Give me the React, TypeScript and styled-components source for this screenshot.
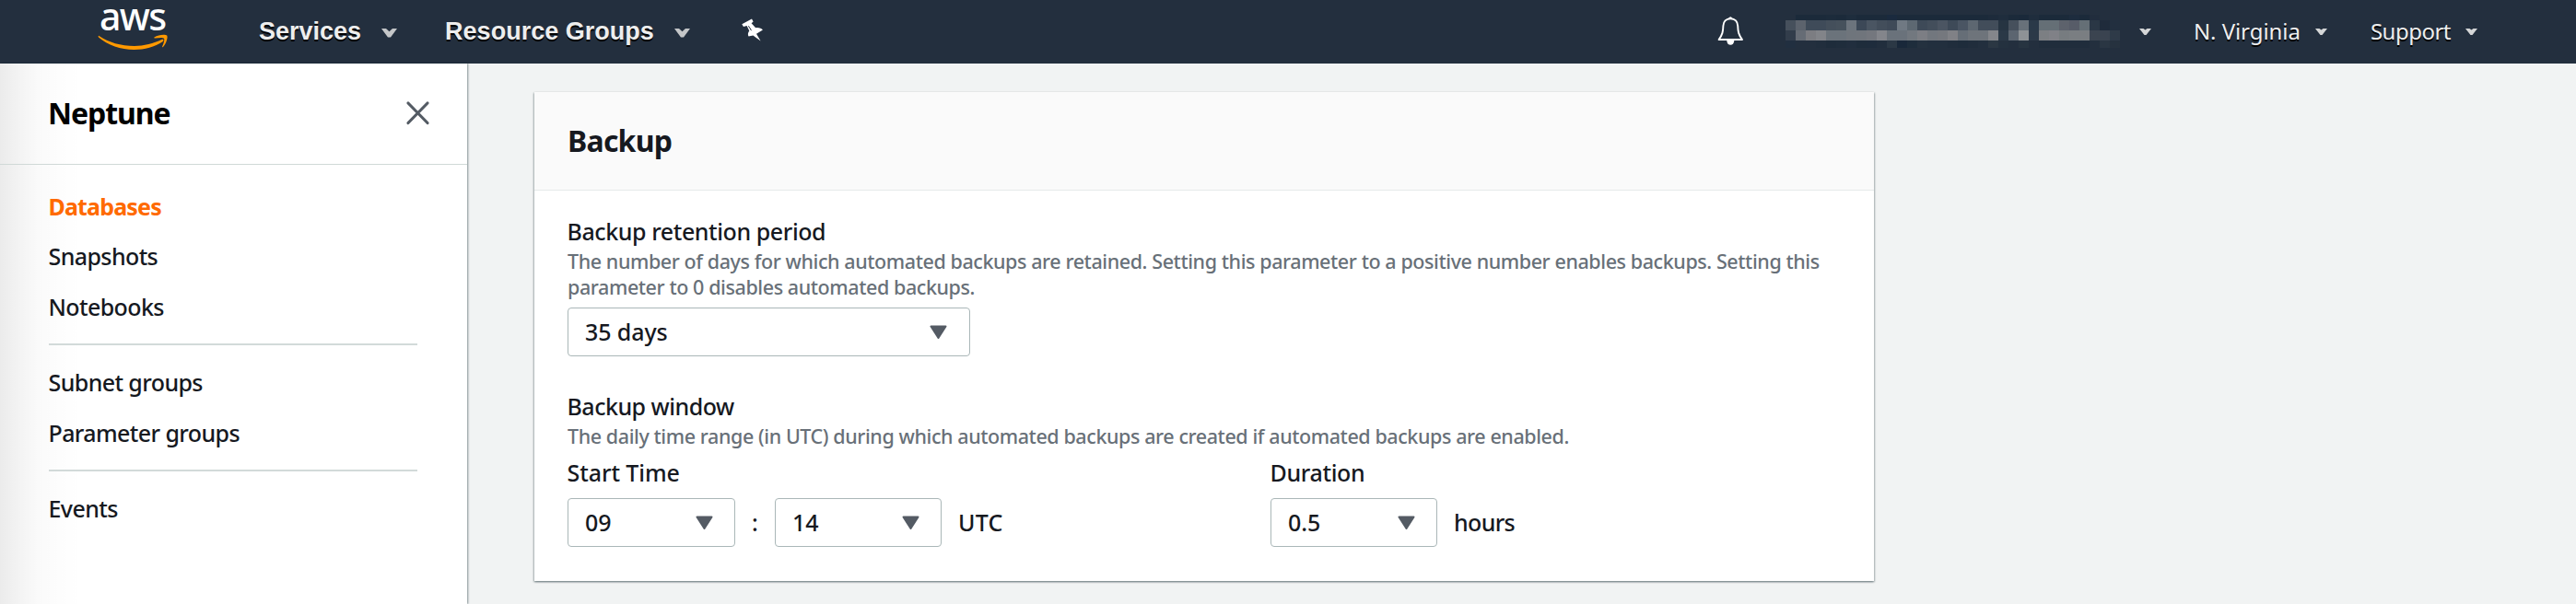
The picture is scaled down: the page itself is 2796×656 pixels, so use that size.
import React from 'react';
import styled, { createGlobalStyle, css } from 'styled-components';

const GlobalStyle = createGlobalStyle`
  * { box-sizing: border-box; }
  body {
    margin: 0;
    background: #f1f3f3;
    color: #16191f;
    font-family: 'Noto Sans', 'Open Sans', sans-serif;
    font-size: 25px;
    font-weight: 500;
  }
  svg { display: block; flex: none; }
`;

const Page = styled.div`
  display: flex;
  flex-direction: column;
  height: 656px;
`;

/* ---------- top bar ---------- */

const TopBar = styled.header`
  display: flex;
  align-items: flex-start;
  justify-content: space-between;
  height: 69px;
  flex: none;
  background: #232f3e;
  color: #eee;
`;

const TopGroup = styled.div`
  display: flex;
  height: 69px;
`;

const LeftGroup = styled(TopGroup)`
  padding-left: 106px;
`;

const RightGroup = styled(TopGroup)`
  padding-right: 107px;
`;

const Logo = styled.a`
  display: flex;
  flex-direction: column;
  width: 77px;
  margin-right: 98px;
  color: #fff;
`;

const LogoWord = styled.span`
  height: 37px;
  padding-left: 2px;
  font-size: 41px;
  font-weight: 500;
  line-height: 35px;
  letter-spacing: -1.7px;
`;

const MenuButton = styled.a<{ $gap: number; $after: number }>`
  display: flex;
  gap: ${(p) => p.$gap}px;
  margin-right: ${(p) => p.$after}px;
  text-shadow: 0 2px 0 #000;
`;

const PrimaryText = styled.span`
  font: bold 27px/68px 'Liberation Sans', Arial, sans-serif;
`;

const SecondaryText = styled.span<{ $track: number }>`
  font-size: 24px;
  font-weight: 400;
  line-height: 67px;
  letter-spacing: ${(p) => p.$track}px;
`;

const CaretBox = styled.span`
  padding-top: 31px;
`;

const PinBox = styled.span`
  padding-top: 19px;
`;

const BellBox = styled.span`
  padding-top: 17px;
  margin-right: 45px;
`;

const Redacted = styled.div`
  display: grid;
  grid-template-columns: repeat(33, 11px);
  grid-template-rows: 6px 11px 11px 8px;
  height: 36px;
  margin: 16px 21px 0 0;
`;

const Cell = styled.i<{ $c: string }>`
  background: ${(p) => p.$c};
`;

/* ---------- side navigation ---------- */

const Body = styled.div`
  display: flex;
  flex: 1;
`;

const Sidebar = styled.nav`
  width: 507px;
  flex: none;
  background: linear-gradient(
    to right,
    rgba(0, 0, 0, 0.08) 0,
    rgba(0, 0, 0, 0.05) 18px,
    rgba(0, 0, 0, 0.02) 42px,
    rgba(0, 0, 0, 0.008) 66px,
    rgba(0, 0, 0, 0) 90px
  ), #fff;
  box-shadow: 1px 0 2px 0 rgba(0, 28, 36, 0.45);
`;

const SideHeader = styled.div`
  display: flex;
  justify-content: space-between;
  height: 110px;
  padding: 0 40px 0 52px;
  border-bottom: 1px solid #d0d9d7;
`;

const SideTitle = styled.h2`
  margin: 0;
  color: #000;
  font-size: 32px;
  font-weight: 700;
  line-height: 107px;
  letter-spacing: -1.05px;
`;

const CloseBox = styled.span`
  padding-top: 40px;
`;

const SideList = styled.div`
  padding: 18px 54px 0 53px;
`;

const SideLink = styled.a<{ $active?: boolean }>`
  display: block;
  margin-left: -0.5px;
  line-height: 54.4px;
  letter-spacing: -0.6px;
  ${(p) =>
    p.$active &&
    css`
      color: #ff6a00;
      font-weight: 700;
      letter-spacing: -0.84px;
    `}
`;

const SideRule = styled.hr`
  height: 2px;
  margin: 13px 0;
  border: 0;
  background: #d2dad9;
`;

/* ---------- backup card ---------- */

const Main = styled.main`
  padding: 31px 0 0 73px;
`;

const Card = styled.section`
  width: 1454px;
  height: 531px;
  background: #fff;
  box-shadow:
    0 1px 2px 0 rgba(0, 28, 36, 0.35),
    1px 1px 2px 0 rgba(0, 28, 36, 0.2),
    -1px 1px 2px 0 rgba(0, 28, 36, 0.2);
`;

const CardHeader = styled.div`
  height: 107px;
  padding-left: 36px;
  background: #fafafa;
  border-bottom: 1px solid #e6eaea;
`;

const CardTitle = styled.h2`
  margin: 0;
  font-size: 32px;
  font-weight: 700;
  line-height: 106px;
  letter-spacing: -0.78px;
`;

const CardBody = styled.div`
  padding: 28px 36px 0;
`;

const Field = styled.div`
  margin-bottom: 38px;
`;

const Label = styled.div<{ $track?: number }>`
  margin-left: -0.5px;
  line-height: 32px;
  letter-spacing: ${(p) => p.$track ?? -0.42}px;
`;

const Hint = styled.p`
  margin: 3px 0 0;
  color: #687078;
  font-size: 21.5px;
  line-height: 28px;
  letter-spacing: -0.415px;
  white-space: nowrap;
`;

const SelectBox = styled.div<{ $width: number }>`
  display: flex;
  align-items: center;
  justify-content: space-between;
  width: ${(p) => p.$width}px;
  height: 53px;
  padding: 0 23px 1px 18px;
  border: 1px solid #aab7b8;
  border-radius: 4px;
  background: #fff;
  letter-spacing: -0.1px;

  svg { margin-top: 1px; }
`;

const RetentionSelect = styled(SelectBox)`
  margin-top: 8px;
  padding-right: 24px;
`;

const TimeGrid = styled.div`
  display: grid;
  grid-template-columns: 763px auto;
  margin-top: 9px;
`;

const InputRow = styled.div`
  display: flex;
  align-items: center;
  margin-top: 12px;
`;

const Separator = styled.span`
  width: 43px;
  padding-bottom: 1px;
  text-align: center;
`;

const Unit = styled.span<{ $track: number }>`
  margin-left: 18px;
  padding-bottom: 1px;
  letter-spacing: ${(p) => p.$track}px;
`;

/* ---------- icons ---------- */

const Smile = () => (
  <svg width="77" height="18" viewBox="0 0 77 18" fill="#ff9900">
    <path d="M1.5 2C12 9 25 13 40 13C50 13 61 10 69.5 6C71.5 5.3 72.3 7 70.5 8.3C62 14 51 17 39.5 17C25 17 11 12 1 3.5C.3 2.5.8 1.5 1.5 2Z" />
    <path d="M61.5 3.5C66 .3 74 .2 75.2 1.6C76.5 3.5 74.5 10.5 71 14C70.3 14.5 69.8 14.2 70.2 13.3C71.5 10.5 73 6 72 4.7C71 3.5 66 4 62.2 4.4C61.2 4.5 60.8 4 61.5 3.5Z" />
  </svg>
);

const Chevron = () => (
  <CaretBox>
    <svg width="17" height="10" viewBox="0 0 17 10">
      <path d="M0 0H5L8.5 3.2L12 0H17L10 9.5H7Z" fill="#c4c6c8" />
    </svg>
  </CaretBox>
);

const Caret = () => (
  <CaretBox>
    <svg width="13" height="8" viewBox="0 0 13 8">
      <path d="M0 0H4.5L6.5 1.4L8.5 0H13L7.5 7H5.5Z" fill="#d4d6d7" />
    </svg>
  </CaretBox>
);

const Pin = () => (
  <PinBox>
    <svg width="25" height="27" viewBox="0 0 25 27">
      <path
        d="M1.3 7.2L12 1.5L13.6 4.4L11.6 6.3L16.2 11.2C19.5 10.8 23 12 23.9 13.6L17 17.8L21.6 25.5L13.4 19.6L8.6 20.6C7.4 18.8 7.8 16 9.3 14.4L6.6 9.1L3 9.9Z"
        fill="#fff"
      />
      <path d="M8.4 9.2L11.6 14.2" stroke="#232f3e" strokeWidth="1" />
    </svg>
  </PinBox>
);

const Bell = () => (
  <BellBox>
    <svg width="29" height="33" viewBox="0 0 29 33">
      <path
        d="M14.3 3.2C9.3 3.2 6.6 6.6 6.4 11C6.2 17.5 5.6 20.5 1.6 26H27C23 20.5 22.4 17.5 22.2 11C22 6.6 19.3 3.2 14.3 3.2Z"
        fill="none"
        stroke="#fff"
        strokeWidth="1.9"
        strokeLinejoin="round"
      />
      <path d="M12.6 3A1.8 1.8 0 0 1 16 3Z" fill="#fff" stroke="#fff" />
      <path d="M10.3 27H18.3A4 4.8 0 0 1 10.3 27Z" fill="#fff" />
    </svg>
  </BellBox>
);

const Close = () => (
  <CloseBox>
    <svg width="27" height="27" viewBox="0 0 27 27">
      <path d="M3 3L24 24.5M24 3L3 24.5" stroke="#545b64" strokeWidth="3.2" strokeLinecap="round" />
    </svg>
  </CloseBox>
);

const Arrow = () => (
  <svg width="19" height="16" viewBox="0 0 19 16">
    <path d="M1.5 1.5H17.5L9.5 14Z" fill="#545b64" stroke="#545b64" strokeWidth="2" strokeLinejoin="round" />
  </svg>
);

const maskRows = [
  '232f3e 1b2a3a 1b2a3a 1b2a3a 1c2b3b 1b2a3a 1e2d3d 1b2a3a 1b2a3a 1b2a3a 1a2a3e 1b2a3a 1b2a3a 1b2a3a 1b2a3a 1b2a3a 1b2a3a 1b2a3a 1b2a3a 1b2a3a 1d2b3b 1f2d3d 1b2a3a 1a293a 1f2d3d 1b2a3a 1b2a3a 1b2a3a 1d2c3e 1b2a3a 212d3d 232f3e 232f3e',
  '46505c 5c636d 3f4b59 3f4b59 444f5b 46515c 6c747d 3c4857 4a5562 434e5b 3f4a58 707983 5d6872 3e4a58 434e5b 4b5562 3e4a58 4a5563 5d6771 424d5a 424d5a 263442 46505c 68717a 2a3949 656f76 656f76 5d626c 575c68 656f76 2a3745 1f2b3b 222f3f',
  '323d4b 666c75 7c7d82 828489 6b737b 6b737b 6f757c 70757c 74777e 83858b 6a727b 6a727b 72787f 7c7e84 72777e 75787e 808186 666e77 6e747b 6e747b 84868b 2b3947 5c6570 8e9296 2c3948 7c7f83 808187 777c80 7a7e82 7a7e82 3b4450 3a4350 2e3a48',
  '212f40 232f3e 232f3e 212e3d 1e2c3b 1f2d3c 212e3e 1e2c3b 1e2c3c 212e3d 2b3845 19283a 1e2d3c 24313f 222f3e 222f3e 202d3c 1e2c3b 202d3c 222f3e 2b3743 24313f 232f3e 273441 232f3e 202d3c 202d3c 202d3c 202d3c 202d3c 232f3e 2a3643 26323f',
];

const AccountMask = () => (
  <Redacted>
    {maskRows.flatMap((row, r) => row.split(' ').map((c, i) => <Cell key={`${r}-${i}`} $c={`#${c}`} />))}
  </Redacted>
);

export default function App() {
  return (
    <Page>
      <GlobalStyle />
      <TopBar>
        <LeftGroup>
          <Logo>
            <LogoWord>aws</LogoWord>
            <Smile />
          </Logo>
          <MenuButton $gap={22} $after={52}>
            <PrimaryText>Services</PrimaryText>
            <Chevron />
          </MenuButton>
          <MenuButton $gap={22} $after={55}>
            <PrimaryText>Resource Groups</PrimaryText>
            <Chevron />
          </MenuButton>
          <Pin />
        </LeftGroup>
        <RightGroup>
          <Bell />
          <MenuButton $gap={0} $after={46}>
            <AccountMask />
            <Caret />
          </MenuButton>
          <MenuButton $gap={16} $after={47}>
            <SecondaryText $track={-0.06}>N. Virginia</SecondaryText>
            <Caret />
          </MenuButton>
          <MenuButton $gap={16} $after={0}>
            <SecondaryText $track={-0.5}>Support</SecondaryText>
            <Caret />
          </MenuButton>
        </RightGroup>
      </TopBar>
      <Body>
        <Sidebar>
          <SideHeader>
            <SideTitle>Neptune</SideTitle>
            <Close />
          </SideHeader>
          <SideList>
            <SideLink $active>Databases</SideLink>
            <SideLink>Snapshots</SideLink>
            <SideLink>Notebooks</SideLink>
            <SideRule />
            <SideLink>Subnet groups</SideLink>
            <SideLink>Parameter groups</SideLink>
            <SideRule />
            <SideLink>Events</SideLink>
          </SideList>
        </Sidebar>
        <Main>
          <Card>
            <CardHeader>
              <CardTitle>Backup</CardTitle>
            </CardHeader>
            <CardBody>
              <Field>
                <Label>Backup retention period</Label>
                <Hint>
                  The number of days for which automated backups are retained. Setting this parameter to a positive
                  number enables backups. Setting this
                  <br />
                  parameter to 0 disables automated backups.
                </Hint>
                <RetentionSelect $width={437}>
                  35 days
                  <Arrow />
                </RetentionSelect>
              </Field>
              <Field>
                <Label $track={-0.5}>Backup window</Label>
                <Hint>
                  The daily time range (in UTC) during which automated backups are created if automated backups are
                  enabled.
                </Hint>
                <TimeGrid>
                  <div>
                    <Label $track={-0.08}>Start Time</Label>
                    <InputRow>
                      <SelectBox $width={182}>
                        09
                        <Arrow />
                      </SelectBox>
                      <Separator>:</Separator>
                      <SelectBox $width={181}>
                        14
                        <Arrow />
                      </SelectBox>
                      <Unit $track={0.2}>UTC</Unit>
                    </InputRow>
                  </div>
                  <div>
                    <Label $track={-0.35}>Duration</Label>
                    <InputRow>
                      <SelectBox $width={181}>
                        0.5
                        <Arrow />
                      </SelectBox>
                      <Unit $track={-0.65}>hours</Unit>
                    </InputRow>
                  </div>
                </TimeGrid>
              </Field>
            </CardBody>
          </Card>
        </Main>
      </Body>
    </Page>
  );
}
